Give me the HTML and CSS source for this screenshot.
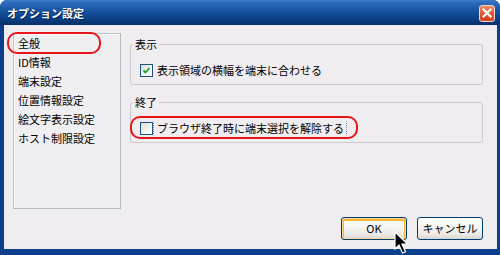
FILE: index.html
```html
<!DOCTYPE html>
<html lang="ja">
<head>
<meta charset="utf-8">
<link rel="stylesheet" href="styles.css">
</head>
<body>
<div class="window">
  <div class="titlebar">
    <span class="title">オプション設定</span>
    <span class="close">
      <svg width="10" height="10" viewBox="0 0 10 10"><path d="M1.5 1.5 L8.5 8.5 M8.5 1.5 L1.5 8.5" stroke="#fff" stroke-width="2.2" stroke-linecap="square"/></svg>
    </span>
  </div>
  <div class="client">
    <div class="main">
      <ul class="list">
        <li>全般</li>
        <li>ID情報</li>
        <li>端末設定</li>
        <li>位置情報設定</li>
        <li>絵文字表示設定</li>
        <li>ホスト制限設定</li>
      </ul>
      <div class="panel">
        <fieldset class="group">
          <legend>表示</legend>
          <div class="row">
            <span class="check checked">
              <svg width="9" height="9" viewBox="0 0 9 9"><path d="M1.5 4.5 L3.5 6.5 L7.5 2" fill="none" stroke="#21a121" stroke-width="1.8"/></svg>
            </span>
            <span class="label">表示領域の横幅を端末に合わせる</span>
          </div>
        </fieldset>
        <fieldset class="group group-second">
          <legend>終了</legend>
          <div class="row">
            <span class="check"></span>
            <span class="label focused">ブラウザ終了時に端末選択を解除する</span>
          </div>
        </fieldset>
      </div>
    </div>
    <div class="buttons">
      <button class="btn btn-default">OK</button>
      <button class="btn">キャンセル</button>
    </div>
    <span class="mark mark-list"></span>
    <span class="mark mark-check"></span>
    <svg class="cursor" width="16" height="24" viewBox="0 0 16 24">
      <path d="M1 1 L1 18 L5 14 L8.5 22 L11.5 20.7 L8 13 L13.5 13 Z" fill="#000" stroke="#fff" stroke-width="1.2" stroke-linejoin="miter"/>
    </svg>
  </div>
</div>
</body>
</html>
```

FILE: styles.css
```css
* { box-sizing: border-box; }
html, body { margin: 0; padding: 0; background: #ffffff; }
body {
  font-family: "Noto Sans CJK JP", "Noto Sans", sans-serif;
  font-size: 11px;
  color: #000;
}
.window {
  width: 500px;
  height: 255px;
  display: flex;
  flex-direction: column;
  background: #0b3f8c;
  border-radius: 7px 7px 0 0;
  overflow: hidden;
}
.titlebar {
  flex: none;
  height: 25px;
  display: flex;
  align-items: center;
  justify-content: space-between;
  padding: 1px 5px 0 7px;
  background: linear-gradient(180deg, #3d7cc9 0%, #2a68b8 15%, #1a55a3 40%, #0f4690 65%, #0a3878 85%, #082f68 100%);
}
.title {
  color: #fff;
  font-weight: bold;
  font-size: 11px;
  line-height: 14px;
  text-shadow: 1px 1px 0 #0a2454;
}
.close {
  width: 16px;
  height: 17px;
  border: 1px solid #f4d8cc;
  border-radius: 3px;
  background: linear-gradient(180deg, #f08a6a 0%, #e0532e 55%, #d0451f 100%);
  display: flex;
  align-items: center;
  justify-content: center;
}
.close svg { display: block; }
.client {
  flex: 1;
  margin: 0 3px 6px 4px;
  background: #efedf0;
  display: flex;
  flex-direction: column;
  padding: 8px 14px 9px 9px;
  position: relative;
}
.main {
  display: flex;
  gap: 9px;
}
.list {
  list-style: none;
  margin: 0;
  padding: 0 0 0 4px;
  width: 108px;
  height: 176px;
  border: 1px solid #c4c3c6;
  border-right-color: #b9b8bb;
  border-bottom-color: #b9b8bb;
  background: #efeef0;
  box-shadow: inset 1px 1px 0 #fbfbfc;
}
.list li {
  line-height: 19px;
  white-space: nowrap;
}
.panel {
  flex: 1;
  display: flex;
  flex-direction: column;
}
.group {
  margin: 4px 0 0 0;
  padding: 12px 8px 7px 2px;
  border: 1px solid #cbc9cc;
  border-radius: 3px;
  min-width: 0;
}
.group-second { margin-top: 10px; }
.group legend {
  padding: 0 2px;
  line-height: 14px;
}
.row {
  display: flex;
  align-items: center;
  height: 14px;
  margin-left: 7px;
}
.check {
  width: 13px;
  height: 13px;
  border: 1px solid #1c5180;
  background: linear-gradient(135deg, #dcdcd7 0%, #f4f4f1 60%, #ffffff 100%);
  display: flex;
  align-items: center;
  justify-content: center;
  flex: none;
}
.check svg { display: block; }
.label {
  margin-left: 0;
  padding: 0 2px 0 3px;
  line-height: 13px;
  border: 1px dotted transparent;
  white-space: nowrap;
}
.label.focused {
  border-color: #8c8c8c;
  border-top-color: transparent;
  border-bottom-color: transparent;
}
.buttons {
  margin-top: auto;
  display: flex;
  justify-content: flex-end;
  gap: 10px;
}
.btn {
  width: 66px;
  height: 23px;
  font-family: inherit;
  font-size: 11px;
  color: #000;
  border: 1px solid #003c74;
  border-radius: 3px;
  background: linear-gradient(180deg, #ffffff 0%, #f6f6f4 40%, #e9e8e4 80%, #d6d5cf 100%);
  padding: 0;
  line-height: 21px;
}
.btn-default {
  box-shadow: inset 0 0 0 1px #fdd88a, inset 0 1px 0 2px #f8b33a;
}
.mark {
  position: absolute;
  border: 2px solid #e8141c;
  border-radius: 10px;
}
.mark-list {
  left: 3px;
  top: 7px;
  width: 94px;
  height: 22px;
}
.mark-check {
  left: 126px;
  top: 91px;
  width: 228px;
  height: 23px;
}
.cursor {
  position: absolute;
  left: 390px;
  top: 206px;
}
```
